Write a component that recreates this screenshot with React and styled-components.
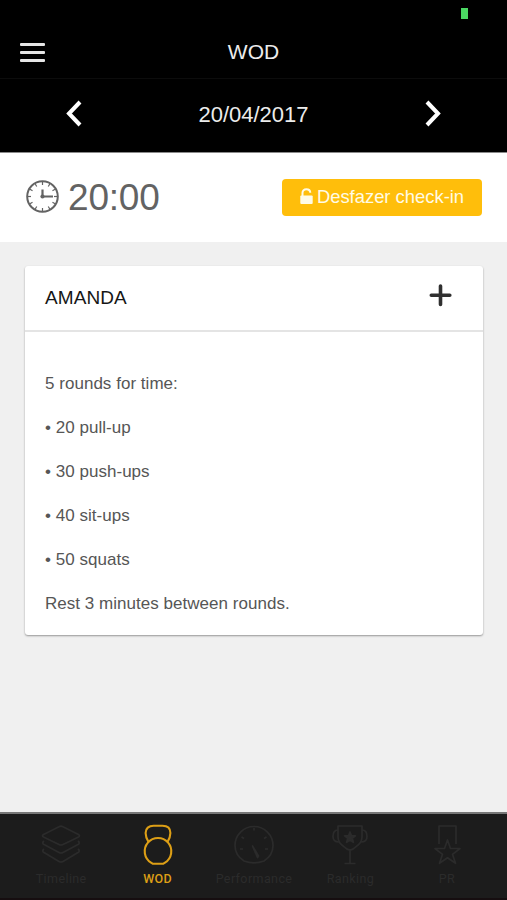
import styled, { createGlobalStyle } from "styled-components";

const GlobalStyle = createGlobalStyle`
  * {
    box-sizing: border-box;
  }

  body {
    margin: 0;
    background: #f0f0f0;
  }

  button {
    border: none;
    padding: 0;
    background: none;
    font: inherit;
    color: inherit;
  }
`;

const Screen = styled.div`
  width: 507px;
  height: 900px;
  display: flex;
  flex-direction: column;
  overflow: hidden;
  background: #f0f0f0;
  font-family: "Liberation Sans", Arial, sans-serif;
`;

const StatusBar = styled.div`
  height: 27px;
  padding: 8px 39px 0 0;
  display: flex;
  justify-content: flex-end;
  background: #000;
`;

const Battery = styled.div`
  width: 7px;
  height: 11px;
  background: #4bd763;
`;

const Header = styled.header`
  height: 52px;
  padding: 0 20px 1px;
  display: grid;
  grid-template-columns: 27px 1fr 27px;
  align-items: center;
  background: #000;
  border-bottom: 1px solid #0c0c0c;
`;

const MenuButton = styled.button`
  height: 19px;
  display: flex;
  flex-direction: column;
  justify-content: space-between;
`;

const MenuLine = styled.span`
  width: 25px;
  height: 3px;
  border-radius: 1px;
  background: #e6e6e6;
`;

const Title = styled.h1`
  margin: 0;
  text-align: center;
  font-size: 21px;
  line-height: 24px;
  font-weight: 400;
  color: #ececec;
`;

const DateBar = styled.div`
  height: 73px;
  padding: 0 65px 5px;
  display: flex;
  justify-content: space-between;
  align-items: center;
  background: #000;
  color: #fff;
`;

const ArrowButton = styled.button`
  width: 17px;
  height: 27px;
  display: flex;
`;

const DateText = styled.span`
  padding-top: 3px;
  font-size: 22px;
  line-height: 26px;
  color: #ececec;
`;

const ClassBar = styled.section`
  height: 90px;
  padding: 0 25px 1px 26px;
  display: flex;
  justify-content: space-between;
  align-items: center;
  background: #fff;
  border-top: 1px solid #8a8a8a;
`;

const ClassTime = styled.div`
  display: flex;
  align-items: center;
  gap: 9px;
  padding-bottom: 1px;
  color: #636363;
`;

const Hour = styled.span`
  padding-top: 2px;
  font-size: 37px;
  line-height: 40px;
  letter-spacing: -0.2px;
`;

const CheckinButton = styled.button`
  width: 200px;
  height: 37px;
  display: flex;
  justify-content: center;
  align-items: center;
  gap: 4px;
  padding-bottom: 1px;
  border-radius: 4px;
  background: #ffbe0b;
  color: #fffbe6;
  font-size: 18.4px;
`;

const Content = styled.main`
  flex: 1;
  padding: 24px 24px 0 25px;
`;

const Card = styled.article`
  height: 369px;
  border-radius: 3px;
  background: #fff;
  box-shadow: 0 1px 2px rgba(0, 0, 0, 0.38);
`;

const CardHeader = styled.div`
  height: 66px;
  padding: 0 31px 6px 20px;
  display: flex;
  justify-content: space-between;
  align-items: center;
  border-bottom: 2px solid #e4e4e4;
`;

const CardTitle = styled.h2`
  margin: 0;
  padding-top: 5px;
  font-size: 19px;
  line-height: 24px;
  font-weight: 400;
  letter-spacing: 0.1px;
  color: #161616;
`;

const CardBody = styled.div`
  padding: 30px 20px 0;
`;

const WorkoutLine = styled.p`
  margin: 0;
  font-size: 17px;
  line-height: 44px;
  letter-spacing: 0.03px;
  color: #565656;
`;

const TabBar = styled.nav`
  height: 88px;
  padding: 10px 12px 0 13px;
  display: flex;
  background: #1c1c1c;
  border-top: 2px solid #777;
  border-bottom: 2px solid #160e10;
`;

const Tab = styled.button`
  flex: 1;
  display: flex;
  flex-direction: column;
  align-items: center;
  gap: 5px;
  font-family: Roboto, sans-serif;
  font-size: 12.5px;
  line-height: 16px;
  letter-spacing: ${(props) => (props.$active ? "0.3px" : "0.4px")};
  font-weight: ${(props) => (props.$active ? 500 : 400)};
  color: ${(props) => (props.$active ? "#dd9f16" : "#2b2b2b")};
`;

const Chevron = ({ points }) => (
  <svg width="17" height="27" viewBox="0 0 17 27" fill="none" stroke="currentColor" strokeWidth="4">
    <polyline points={points} />
  </svg>
);

const clockMarks = [0, 30, 60, 90, 120, 150, 180, 210, 240, 270, 300, 330];

const ClockIcon = () => (
  <svg width="33" height="33" viewBox="0 0 33 33" fill="none" stroke="currentColor">
    <circle cx="16.5" cy="16.5" r="15.3" strokeWidth="2" />
    {clockMarks.map((angle) => (
      <path key={angle} d="M16.5 2v3" strokeWidth="1.2" transform={`rotate(${angle} 16.5 16.5)`} />
    ))}
    <path d="M16.5 9.5v7h10.5" strokeWidth="2.2" />
    <circle cx="16.5" cy="16.5" r="2.1" fill="currentColor" stroke="none" />
  </svg>
);

const UnlockIcon = () => (
  <svg width="13" height="17" viewBox="0 0 13 17">
    <path d="M2.5 8V4.8C2.5 2.5 4.1 1.2 6.4 1.2S10.2 2.6 10.3 4.7" fill="none" stroke="currentColor" strokeWidth="2" />
    <rect x="0.3" y="7.6" width="12.4" height="8.4" rx="1" fill="currentColor" />
  </svg>
);

const PlusIcon = () => (
  <svg width="24" height="24" viewBox="0 0 24 24" stroke="#303030" strokeWidth="3.6" strokeLinecap="round">
    <path d="M12.5 3v18.5M3.3 12.2h18.5" />
  </svg>
);

const TabIcon = ({ children }) => (
  <svg width="44" height="42" viewBox="0 0 44 42" fill="none" stroke="currentColor" strokeWidth="1.7" strokeLinejoin="round">
    {children}
  </svg>
);

const tabs = [
  {
    label: "Timeline",
    icon: (
      <>
        <path d="M20 2.7q2-1 4 0l15.500 7.800q2 1.200 0 2.400L24 20.500q-2 1-4 0L4.500 12.900q-2-1.200 0-2.400z" />
        <path d="M5 17q-2.500 2 0 3.600L20 28.500q2 1 4 0l15-7.900q2.500-1.600 0-3.600" />
        <path d="M5 25q-2.500 2 0 3.600L20 37.500q2 1 4 0l15-8.900q2.500-1.600 0-3.600" />
      </>
    ),
  },
  {
    label: "WOD",
    active: true,
    icon: (
      <g strokeWidth="2.1">
        <path d="M12.5 18C10.600 14.800 9.600 12 9.600 9 9.600 4.300 12.800 1.800 17.500 1.800h9c4.700 0 7.900 2.500 7.900 7.200 0 3-1 5.800-2.900 9" />
        <path d="M15 38.600A13.300 13.300 0 1 1 29 38.600L27 39.800H17z" />
      </g>
    ),
  },
  {
    label: "Performance",
    icon: (
      <>
        <path d="M12 37C6.5 33.5 3 28 3 21.5a19 19 0 0 1 38 0C41 28 37.5 33.5 32 37c-6 2.200-14 2.200-20 0z" />
        <path d="M20.5 22l5 11.500 1-1.500z" />
        <path d="M22 4v2.500M9.500 13l2.500 1.500M34.500 13L32 14.500M8 25h3M36 25h-3" />
      </>
    ),
  },
  {
    label: "Ranking",
    icon: (
      <>
        <path d="M10 2h24v11c0 6-4 8-9 12-1.500 1.200-4.500 1.200-6 0-5-4-9-6-9-12z" />
        <path d="M10 6c-4 0-5 3-5 6.500S7 18 11 18M34 6c4 0 5 3 5 6.500S37 18 33 18M22 26v13M16.500 39.500h11" />
        <path d="M22 8l1.400 3.800h4l-3.200 2.500 1.200 4-3.400-2.300-3.400 2.300 1.200-4-3.200-2.500h4z" fill="currentColor" />
      </>
    ),
  },
  {
    label: "PR",
    icon: (
      <>
        <path d="M14 20V2h17v18" />
        <path d="M22.500 16l3 8.500H35l-7.500 5.800 3 9-8-5.500-8 5.500 3-9L10 24.500h9.500z" />
      </>
    ),
  },
];

const workout = [
  "5 rounds for time:",
  "• 20 pull-up",
  "• 30 push-ups",
  "• 40 sit-ups",
  "• 50 squats",
  "Rest 3 minutes between rounds.",
];

const App = () => {
  return (
    <>
      <GlobalStyle />
      <Screen>
        <StatusBar>
          <Battery />
        </StatusBar>
        <Header>
          <MenuButton aria-label="Menu">
            <MenuLine />
            <MenuLine />
            <MenuLine />
          </MenuButton>
          <Title>WOD</Title>
        </Header>
        <DateBar>
          <ArrowButton aria-label="Anterior"><Chevron points="15,2 4,13.5 15,25" /></ArrowButton>
          <DateText>20/04/2017</DateText>
          <ArrowButton aria-label="Próximo"><Chevron points="2,2 13,13.5 2,25" /></ArrowButton>
        </DateBar>
        <ClassBar>
          <ClassTime>
            <ClockIcon />
            <Hour>20:00</Hour>
          </ClassTime>
          <CheckinButton>
            <UnlockIcon />
            Desfazer check-in
          </CheckinButton>
        </ClassBar>
        <Content>
          <Card>
            <CardHeader>
              <CardTitle>AMANDA</CardTitle>
              <PlusIcon />
            </CardHeader>
            <CardBody>
              {workout.map((line) => (
                <WorkoutLine key={line}>{line}</WorkoutLine>
              ))}
            </CardBody>
          </Card>
        </Content>
        <TabBar>
          {tabs.map((tab) => (
            <Tab key={tab.label} $active={tab.active}>
              <TabIcon>{tab.icon}</TabIcon>
              {tab.label}
            </Tab>
          ))}
        </TabBar>
      </Screen>
    </>
  );
};

export default App;
